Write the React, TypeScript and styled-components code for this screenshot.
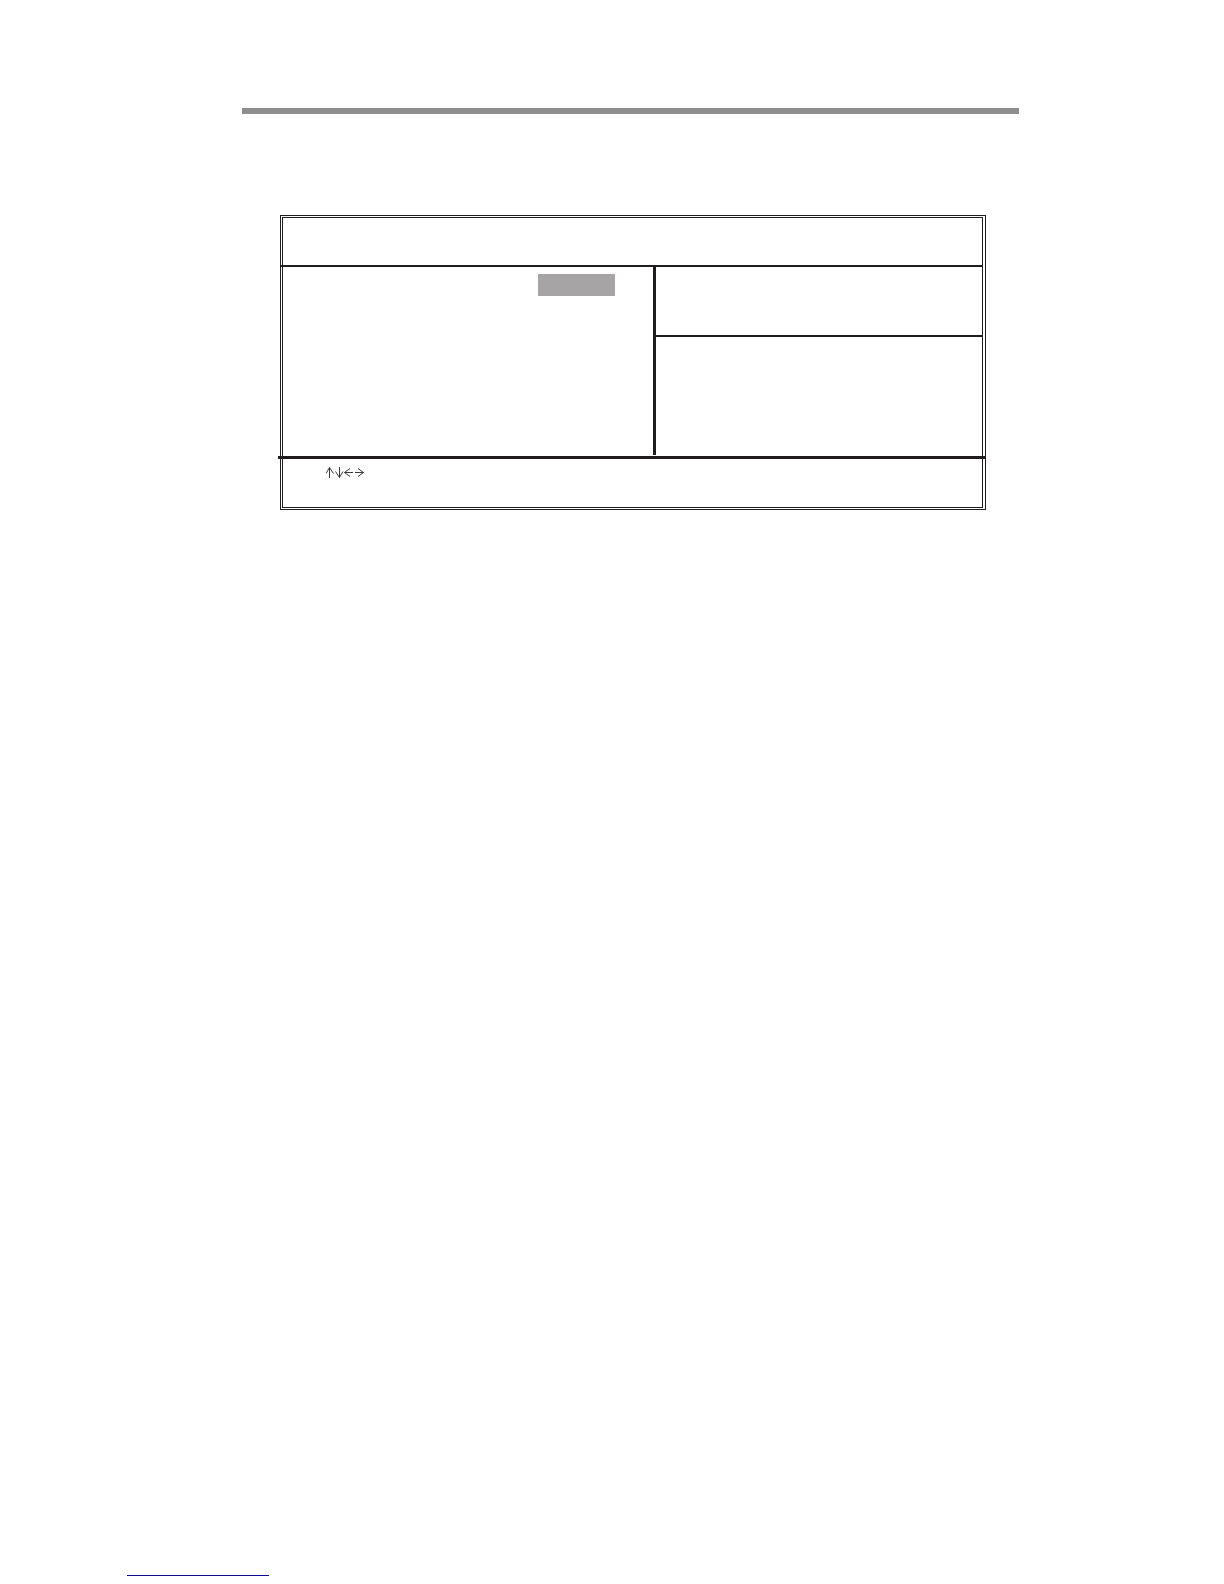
import React from "react";
import styled, { createGlobalStyle } from "styled-components";

const ink = "#1f1d1e";

const GlobalStyle = createGlobalStyle`
  * { box-sizing: border-box; }
  body {
    margin: 0;
    background: #ffffff;
    color: ${ink};
    font-family: "Liberation Sans", Arial, sans-serif;
  }
`;

const Page = styled.div`
  display: flex;
  flex-direction: column;
  min-height: 100vh;
  padding-bottom: 8px;
`;

const Sheet = styled.main`
  flex: 1;
  padding: 108px 205px 0 242px;
`;

const HeadRule = styled.hr`
  height: 6px;
  margin: 0 0 101px;
  border: 0;
  background: #8e8e8e;
`;

const OuterFrame = styled.section`
  margin: 0 33px 0 38px;
  padding: 1px 2px 1px 1px;
  border: 1px solid ${ink};
`;

const InnerFrame = styled.div`
  border: 1px solid ${ink};
`;

const TitleBar = styled.header`
  height: 49px;
  margin-left: -2px;
  border-bottom: 2px solid ${ink};
`;

const Body = styled.div`
  display: grid;
  grid-template-columns: minmax(0, 370fr) minmax(0, 329fr);
  height: 188px;
`;

const Options = styled.div`
  display: flex;
  justify-content: flex-end;
  align-items: flex-start;
  padding: 7px 38px 0 0;
`;

const Highlight = styled.div`
  width: 77px;
  height: 22px;
  background: #a6a4a5;
`;

const Side = styled.div`
  border-left: 3px solid ${ink};
`;

const LevelBox = styled.div`
  height: 70px;
  border-bottom: 2px solid ${ink};
`;

const KeyBar = styled.footer`
  height: 51px;
  margin: 1px -4px 0 -5px;
  padding: 8px 0 0 48px;
  border-top: 3px solid ${ink};
`;

const Arrows = styled.svg`
  display: block;
  fill: none;
  stroke: #3c3a3b;
  stroke-width: 1;
`;

const BottomBar = styled.div`
  display: flex;
  padding-left: 127px;
`;

const BottomLink = styled.a`
  width: 142px;
  height: 16px;
  border-bottom: 1px solid #0c0c94;
`;

export default function App() {
  return (
    <>
      <GlobalStyle />
      <Page>
        <Sheet>
          <HeadRule />
          <OuterFrame>
            <InnerFrame>
              <TitleBar />
              <Body>
                <Options>
                  <Highlight />
                </Options>
                <Side>
                  <LevelBox />
                </Side>
              </Body>
              <KeyBar>
                <Arrows width="38" height="11" viewBox="0 0 38 11" aria-hidden="true">
                  <path d="M3.5 11V0.5M0 6.5L3.5 0.5L7.5 6.5" />
                  <path d="M13.5 0V10.5M9.5 4.5L13.5 10.5L17 4.5" />
                  <path d="M27 5.5H18.5M24 1.5L18.5 5.5L24 9.5" />
                  <path d="M29 5.5H37.5M32 1.5L37.5 5.5L32 9.5" />
                </Arrows>
              </KeyBar>
            </InnerFrame>
          </OuterFrame>
        </Sheet>
        <BottomBar>
          <BottomLink href="#" aria-label="Link" />
        </BottomBar>
      </Page>
    </>
  );
}
